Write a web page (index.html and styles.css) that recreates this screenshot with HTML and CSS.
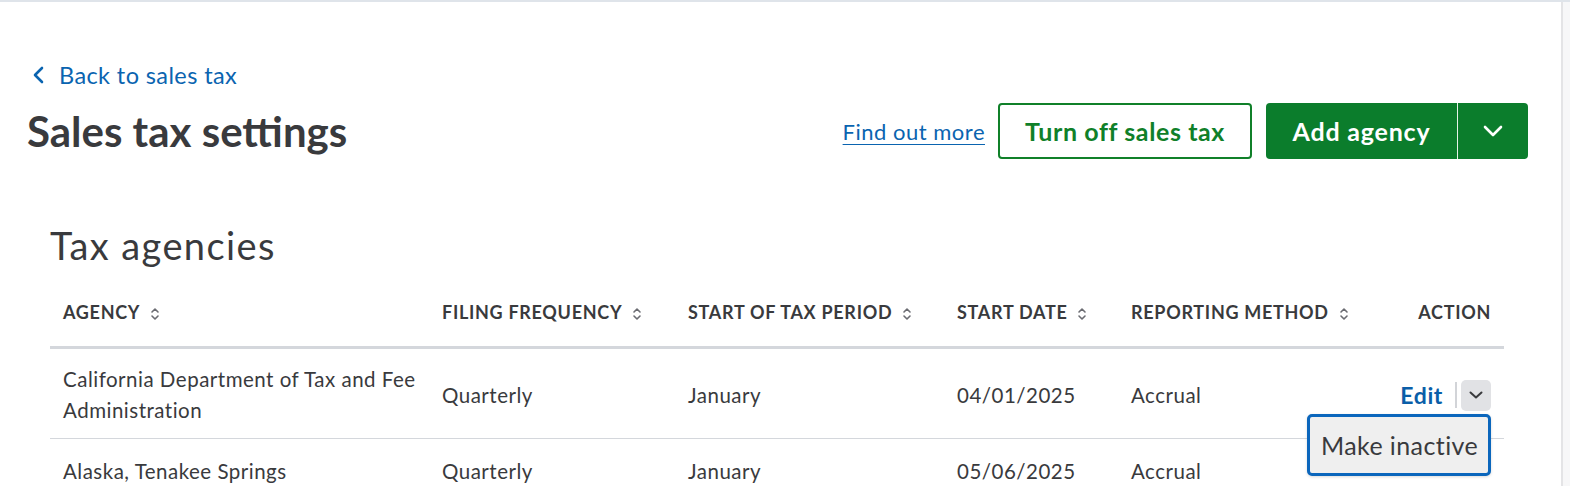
FILE: index.html
```html
<!DOCTYPE html>
<html lang="en">
<head>
<meta charset="utf-8">
<title>Sales tax settings</title>
<link rel="stylesheet" href="styles.css">
</head>
<body>
<div class="page">
  <main class="content">
    <a class="back" href="#">
      <svg class="back-icon" width="12" height="18" viewBox="0 0 12 18"><path d="M10 2 L3 9 L10 16" fill="none" stroke="currentColor" stroke-width="2.6" stroke-linecap="round" stroke-linejoin="round"/></svg>
      <span>Back to sales tax</span>
    </a>
    <div class="head">
      <h1 class="title">Sales tax settings</h1>
      <div class="actions">
        <a class="find" href="#">Find out more</a>
        <button class="btn-outline">Turn off sales tax</button>
        <div class="split">
          <button class="split-main">Add agency</button>
          <button class="split-arrow">
            <svg width="22" height="14" viewBox="0 0 22 14"><path d="M3 3 L11 11 L19 3" fill="none" stroke="#fff" stroke-width="2.6" stroke-linecap="round" stroke-linejoin="round"/></svg>
          </button>
        </div>
      </div>
    </div>

    <section class="agencies">
      <h2 class="sub">Tax agencies</h2>
      <div class="table">
        <div class="row thead">
          <div class="cell">AGENCY <svg class="sort" width="10" height="16" viewBox="0 0 10 16"><path d="M2 6 L5 3 L8 6 M2 10 L5 13 L8 10" fill="none" stroke="#6b6c72" stroke-width="1.6" stroke-linecap="round" stroke-linejoin="round"/></svg></div>
          <div class="cell">FILING FREQUENCY <svg class="sort" width="10" height="16" viewBox="0 0 10 16"><path d="M2 6 L5 3 L8 6 M2 10 L5 13 L8 10" fill="none" stroke="#6b6c72" stroke-width="1.6" stroke-linecap="round" stroke-linejoin="round"/></svg></div>
          <div class="cell">START OF TAX PERIOD <svg class="sort" width="10" height="16" viewBox="0 0 10 16"><path d="M2 6 L5 3 L8 6 M2 10 L5 13 L8 10" fill="none" stroke="#6b6c72" stroke-width="1.6" stroke-linecap="round" stroke-linejoin="round"/></svg></div>
          <div class="cell">START DATE <svg class="sort" width="10" height="16" viewBox="0 0 10 16"><path d="M2 6 L5 3 L8 6 M2 10 L5 13 L8 10" fill="none" stroke="#6b6c72" stroke-width="1.6" stroke-linecap="round" stroke-linejoin="round"/></svg></div>
          <div class="cell">REPORTING METHOD <svg class="sort" width="10" height="16" viewBox="0 0 10 16"><path d="M2 6 L5 3 L8 6 M2 10 L5 13 L8 10" fill="none" stroke="#6b6c72" stroke-width="1.6" stroke-linecap="round" stroke-linejoin="round"/></svg></div>
          <div class="cell right">ACTION</div>
        </div>
        <div class="row">
          <div class="cell first">California Department of Tax and Fee Administration</div>
          <div class="cell">Quarterly</div>
          <div class="cell">January</div>
          <div class="cell">04/01/2025</div>
          <div class="cell">Accrual</div>
          <div class="cell right">
            <div class="act">
              <a class="edit" href="#">Edit</a>
              <span class="sep"></span>
              <span class="dd">
                <button class="dd-btn"><svg width="16" height="10" viewBox="0 0 16 10"><path d="M2.5 2.5 L8 7.5 L13.5 2.5" fill="none" stroke="#393a3d" stroke-width="2" stroke-linecap="round" stroke-linejoin="round"/></svg></button>
                <div class="menu">Make inactive</div>
              </span>
            </div>
          </div>
        </div>
        <div class="row">
          <div class="cell first">Alaska, Tenakee Springs</div>
          <div class="cell">Quarterly</div>
          <div class="cell">January</div>
          <div class="cell">05/06/2025</div>
          <div class="cell">Accrual</div>
          <div class="cell right"></div>
        </div>
      </div>
    </section>
  </main>
  <div class="gutter"></div>
</div>
</body>
</html>
```

FILE: styles.css
```css
* { box-sizing: border-box; }
html, body { margin: 0; padding: 0; }
body {
  font-family: Lato, "Noto Sans", "Liberation Sans", sans-serif;
  color: #393a3d;
  background: #fff;
  height: 486px;
  overflow: hidden;
  border-top: 2px solid #dfe4ea;
}
.page {
  display: flex;
  height: 484px;
}
.content {
  flex: 1;
  min-width: 0;
  padding: 58px 33px 0 27px;
}
.gutter {
  flex: none;
  width: 9px;
  border-left: 2px solid #e4e4e6;
  background: #f7f7f8;
}
.back {
  display: inline-flex;
  align-items: center;
  gap: 15px;
  color: #0a64b0;
  text-decoration: none;
  font-size: 23.5px;
  letter-spacing: 0.4px;
  line-height: 30px;
  margin-left: 5px;
}
.back-icon { display: block; }
.head {
  display: flex;
  align-items: center;
  justify-content: space-between;
  margin-top: 13px;
  height: 56px;
}
.title {
  margin: 0;
  font-size: 42px;
  line-height: 50px;
  font-weight: 700;
  color: #393a3d;
}
.actions {
  display: flex;
  align-items: center;
}
.find {
  color: #0a64b0;
  font-size: 22px;
  letter-spacing: 0.5px;
  text-decoration: underline;
  text-decoration-thickness: 1px;
  text-underline-offset: 4px;
  margin-right: 13px;
}
.btn-outline {
  height: 56px;
  width: 254px;
  padding: 0;
  border: 2px solid #108029;
  border-radius: 4px;
  background: #fff;
  color: #108029;
  font-family: inherit;
  font-size: 25px;
  letter-spacing: 0.6px;
  font-weight: 700;
  margin-right: 14px;
}
.split {
  display: flex;
  height: 56px;
  border-radius: 4px;
  overflow: hidden;
  background: #0b7d2c;
}
.split-main, .split-arrow {
  border: 0;
  background: transparent;
  color: #fff;
  font-family: inherit;
  font-size: 25px;
  letter-spacing: 0.8px;
  font-weight: 700;
  padding: 0;
}
.split-main {
  width: 192px;
  border-right: 1px solid #e6f2e8;
}
.split-arrow {
  width: 70px;
  display: flex;
  align-items: center;
  justify-content: center;
}
.agencies {
  padding: 0 24px 0 23px;
  margin-top: 63px;
}
.sub {
  margin: 0;
  font-size: 38px;
  letter-spacing: 1.4px;
  font-weight: 400;
  color: #393a3d;
  line-height: 46px;
}
.table { margin-top: 22px; }
.row {
  display: grid;
  grid-template-columns: 379px 246px 269px 174px minmax(0, 1fr) 120px;
  border-bottom: 1px solid #d4d7dc;
}
.thead {
  border-bottom: 3px solid #d4d7dc;
  font-size: 18px;
  letter-spacing: 0.7px;
  font-weight: 700;
  color: #393a3d;
}
.thead .cell {
  padding: 10px 13px 22px;
  display: flex;
  align-items: center;
  gap: 10px;
  line-height: 24px;
  white-space: nowrap;
}
.thead .cell.right { justify-content: flex-end; }
.sort { flex: none; margin-top: 3px; }
.row:not(.thead) .cell {
  padding: 15px 13px 12px;
  font-size: 20.5px;
  letter-spacing: 0.5px;
  line-height: 31px;
  display: flex;
  align-items: center;
}
.row:not(.thead) .cell.first { padding-right: 0; }
.row:last-child .cell { padding-top: 17px; }
.row .cell.right { justify-content: flex-end; }
.act {
  display: flex;
  align-items: center;
}
.edit {
  color: #0a5ea8;
  font-size: 23px;
  letter-spacing: 0.6px;
  font-weight: 700;
  text-decoration: none;
}
.sep {
  width: 2px;
  height: 26px;
  background: #d2d4d8;
  margin: 0 4px 0 12px;
}
.dd { position: relative; display: block; }
.dd-btn {
  display: flex;
  align-items: center;
  justify-content: center;
  width: 30px;
  height: 31px;
  border: 0;
  border-radius: 5px;
  background: #e1e2e5;
  padding: 0;
}
.menu {
  position: absolute;
  right: 0;
  top: 34px;
  width: 184px;
  height: 62px;
  border: 3px solid #0b66bc;
  border-radius: 5px;
  background: #efefef;
  font-size: 25px;
  letter-spacing: 0.4px;
  line-height: 56px;
  padding-left: 11px;
  color: #393a3d;
  white-space: nowrap;
  box-shadow: 0 1px 3px rgba(0,0,0,0.15);
}
```
